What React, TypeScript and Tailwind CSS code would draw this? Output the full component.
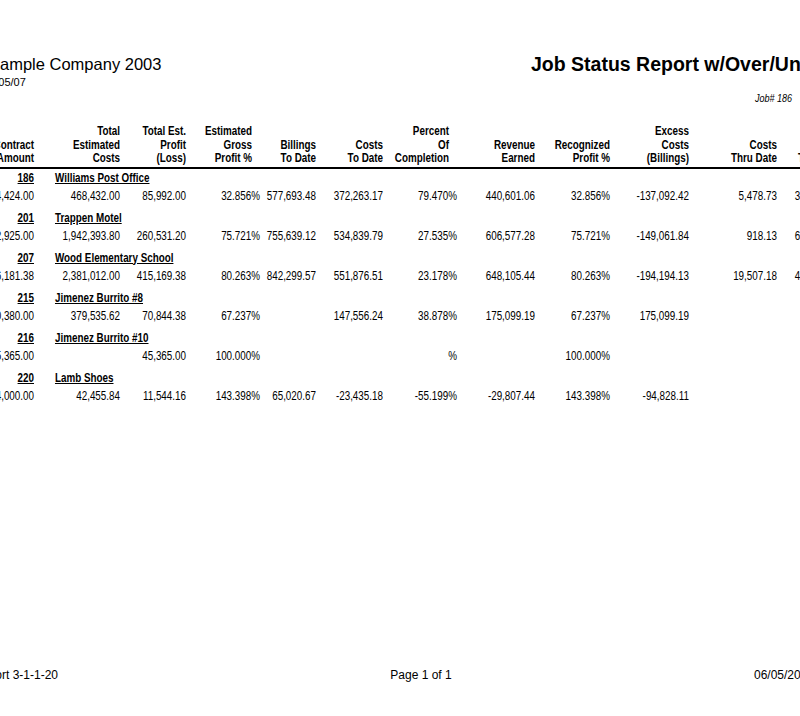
import React from "react";

// The report uses Arial Narrow; it is not installed, so the table is set in
// Liberation Sans and condensed to 82% width as one block.
const cols =
  "grid grid-cols-[90.24px_104.88px_80.49px_90.24px_68.29px_81.71px_90.24px_95.12px_91.46px_96.34px_107.32px_81.71px]";

const headers: { lines: string[]; cls?: string }[] = [
  { lines: ["", "Contract", "Amount"] },
  { lines: ["Total", "Estimated", "Costs"] },
  { lines: ["Total Est.", "Profit", "(Loss)"] },
  { lines: ["Estimated", "Gross", "Profit %"], cls: "pr-[9.76px]" },
  { lines: ["", "Billings", "To Date"] },
  { lines: ["", "Costs", "To Date"] },
  { lines: ["Percent", "Of", "Completion"], cls: "pr-[9.76px]" },
  { lines: ["", "Revenue", "Earned"] },
  { lines: ["", "Recognized", "Profit %"], cls: "pl-[11px] text-center" },
  { lines: ["Excess", "Costs", "(Billings)"] },
  { lines: ["", "Costs", "Thru Date"] },
  { lines: ["", "Billings", "Thru Date"] },
];

const jobs = [
  {
    job: "186",
    name: "Williams Post Office",
    values: ["554,424.00", "468,432.00", "85,992.00", "32.856%", "577,693.48", "372,263.17", "79.470%", "440,601.06", "32.856%", "-137,092.42", "5,478.73", "366,784.44"],
  },
  {
    job: "201",
    name: "Trappen Motel",
    values: ["2,202,925.00", "1,942,393.80", "260,531.20", "75.721%", "755,639.12", "534,839.79", "27.535%", "606,577.28", "75.721%", "-149,061.84", "918.13", "614,280.18"],
  },
  {
    job: "207",
    name: "Wood Elementary School",
    values: ["2,796,181.38", "2,381,012.00", "415,169.38", "80.263%", "842,299.57", "551,876.51", "23.178%", "648,105.44", "80.263%", "-194,194.13", "19,507.18", "497,536.82"],
  },
  {
    job: "215",
    name: "Jimenez Burrito #8",
    values: ["450,380.00", "379,535.62", "70,844.38", "67.237%", "", "147,556.24", "38.878%", "175,099.19", "67.237%", "175,099.19", "", ""],
  },
  {
    job: "216",
    name: "Jimenez Burrito #10",
    values: ["45,365.00", "", "45,365.00", "100.000%", "", "", "%", "", "100.000%", "", "", ""],
  },
  {
    job: "220",
    name: "Lamb Shoes",
    values: ["54,000.00", "42,455.84", "11,544.16", "143.398%", "65,020.67", "-23,435.18", "-55.199%", "-29,807.44", "143.398%", "-94,828.11", "", ""],
  },
];

const arial = "font-['Liberation_Sans',Arial,sans-serif]";

export default function App() {
  return (
    <div className={`w-[800px] h-[716px] overflow-hidden bg-white text-black ${arial}`}>
      <div className="-ml-[40px] w-[960px] h-full flex flex-col">
        {/* Report title */}
        <div className="flex pt-[53px]">
          <div className="w-[571px] shrink-0">
            <div className="pl-[29px] text-[16.5px] leading-[22px] whitespace-nowrap">Sample Company 2003</div>
            <div className="pl-[23px] text-[11px] leading-[15px] whitespace-nowrap">06/05/07</div>
          </div>
          <div className="text-[19.5px] leading-[22px] font-bold whitespace-nowrap">
            Job Status Report w/Over/Under Billings
          </div>
        </div>

        <div className="pl-[795px] mt-[2px] text-[11px] leading-[13px] italic whitespace-nowrap">
          <span className="inline-block origin-left scale-x-[0.82]">Job# 186</span>
        </div>

        {/* Condensed table */}
        <div className="w-[1078px] origin-left scale-x-[0.82] text-[12px]">
          <div className={`${cols} mt-[20px] pb-[1px] border-b-2 border-black font-bold leading-[13.5px]`}>
            {headers.map((h, i) => (
              <div key={i} className={`flex flex-col text-right whitespace-nowrap ${h.cls ?? ""}`}>
                {h.lines.map((l, j) => (
                  <div key={j} className="h-[13.5px]">
                    {l}
                  </div>
                ))}
              </div>
            ))}
          </div>

          <div className="mt-[2px]">
            {jobs.map((j) => (
              <div key={j.job} className="pb-[8px]">
                <div className={`${cols} leading-[14px] font-bold`}>
                  <div className="text-right underline">{j.job}</div>
                  <div className="col-span-4 pl-[25.6px] whitespace-nowrap">
                    <span className="underline">{j.name}</span>
                  </div>
                </div>
                <div className={`${cols} mt-[4px] leading-[14px]`}>
                  {j.values.map((v, k) => (
                    <div key={k} className="flex justify-end whitespace-nowrap">
                      {v}
                    </div>
                  ))}
                </div>
              </div>
            ))}
          </div>
        </div>

        {/* Footer */}
        <div className="mt-auto pb-[34px] flex text-[12px] leading-[14px] whitespace-nowrap">
          <div className="w-[98px] shrink-0 flex justify-end">
            <span>JC Report 3-1-1-20</span>
          </div>
          <div className="w-[696px] shrink-0 pl-[30px] text-center">Page 1 of 1</div>
          <div>06/05/2007</div>
        </div>
      </div>
    </div>
  );
}
